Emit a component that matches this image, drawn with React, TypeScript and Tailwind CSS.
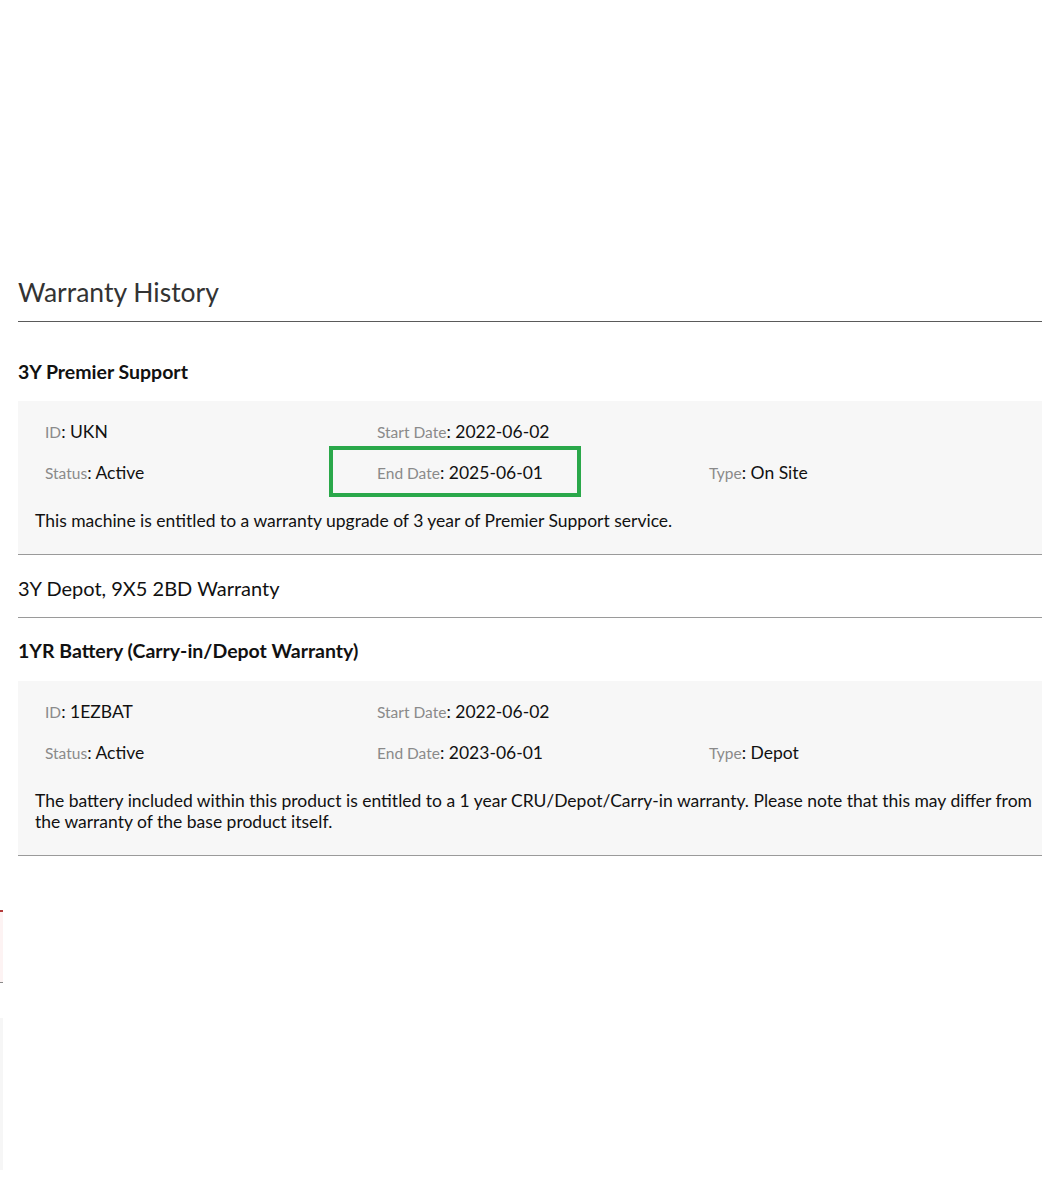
import React from "react";

interface Warranty {
  name: string;
  bold: boolean;
  id?: string;
  start?: string;
  end?: string;
  status?: string;
  type?: string;
  note?: string;
  highlightEnd?: boolean;
}

const warranties: Warranty[] = [
  {
    name: "3Y Premier Support",
    bold: true,
    id: "UKN",
    start: "2022-06-02",
    end: "2025-06-01",
    status: "Active",
    type: "On Site",
    note: "This machine is entitled to a warranty upgrade of 3 year of Premier Support service.",
    highlightEnd: true,
  },
  { name: "3Y Depot, 9X5 2BD Warranty", bold: false },
  {
    name: "1YR Battery (Carry-in/Depot Warranty)",
    bold: true,
    id: "1EZBAT",
    start: "2022-06-02",
    end: "2023-06-01",
    status: "Active",
    type: "Depot",
    note: "The battery included within this product is entitled to a 1 year CRU/Depot/Carry-in warranty. Please note that this may differ from the warranty of the base product itself.",
  },
];

function Field({ label, value }: { label: string; value: string }) {
  return (
    <div className="h-6 leading-6 whitespace-nowrap">
      <span className="text-[15.5px] text-[#8a8a8a]">{label}</span>
      <span className="text-[17.5px] text-[#111]">: {value}</span>
    </div>
  );
}

function WarrantyItem({ w, first }: { w: Warranty; first: boolean }) {
  const hasDetails = !!w.id;
  return (
    <div>
      <div
        className={`pt-[21px] leading-6 text-[#111] ${w.bold ? "text-[19.5px] font-bold" : "text-[20px] font-normal border-b border-[#9a9a9a] pb-[17px]"}`}
      >
        {w.name}
      </div>
      {hasDetails && (
        <div
          className={`${first ? "mt-[17px]" : "mt-[18px]"} bg-[#f7f7f7] border-b border-[#9a9a9a] pt-[19px] pb-[23px] pl-[17px]`}
        >
          <div className="ml-[10px] grid grid-cols-[332px_332px_1fr] gap-y-[17px]">
            <Field label="ID" value={w.id!} />
            <Field label="Start Date" value={w.start!} />
            <div />
            <Field label="Status" value={w.status!} />
            <div className="relative">
              <Field label="End Date" value={w.end!} />
              {w.highlightEnd && (
                <div className="absolute left-[-48px] top-[-15px] w-[252px] h-[51px] border-4 border-[#2aa84a]" />
              )}
            </div>
            <Field label="Type" value={w.type!} />
          </div>
          <p className="mt-[25px] text-[17.5px] leading-[21px] text-[#111]">{w.note}</p>
        </div>
      )}
    </div>
  );
}

export default function App() {
  return (
    <div
      className="relative w-[1042px] min-h-[1194px] bg-white overflow-hidden"
      style={{ fontFamily: "Lato, 'Liberation Sans', sans-serif" }}
    >
      <div className="pl-[18px] pt-[277px]">
        <h2 className="text-[26.5px] leading-[1.2] text-[#333] border-b border-[#5a5a5a] pb-[12px]">
          Warranty History
        </h2>
        <div className="pt-[17px]">
          {warranties.map((w, i) => (
            <WarrantyItem key={w.name} w={w} first={i === 0} />
          ))}
        </div>
      </div>

      {/* clipped element peeking in at the left edge */}
      <div className="absolute left-0 top-[910px] w-[3px] h-[73px] bg-[#fdf3f3] border-t-2 border-[#b33a3a] border-b border-b-[#8a8a8a]" />
      <div className="absolute left-0 top-[1018px] w-[3px] h-[152px] bg-[#f6f6f6]" />
    </div>
  );
}
